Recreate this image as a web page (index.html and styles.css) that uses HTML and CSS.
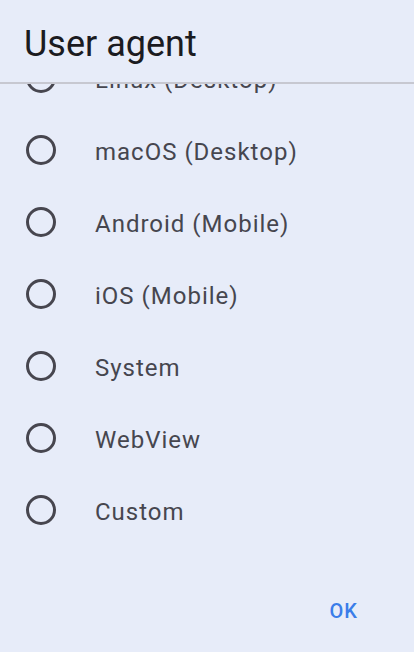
FILE: index.html
```html
<!DOCTYPE html>
<html lang="en">
<head>
<meta charset="utf-8">
<title>User agent</title>
<link rel="stylesheet" href="styles.css">
</head>
<body>
<div class="dialog">
  <header class="header">
    <h1 class="title">User agent</h1>
  </header>
  <div class="divider"></div>
  <div class="list">
    <div class="list-inner">
      <div class="row"><svg class="radio" viewBox="0 0 30 30"><circle cx="15" cy="15" r="13.5"/></svg><span class="label">Linux (Desktop)</span></div>
      <div class="row"><svg class="radio" viewBox="0 0 30 30"><circle cx="15" cy="15" r="13.5"/></svg><span class="label">macOS (Desktop)</span></div>
      <div class="row"><svg class="radio" viewBox="0 0 30 30"><circle cx="15" cy="15" r="13.5"/></svg><span class="label">Android (Mobile)</span></div>
      <div class="row"><svg class="radio" viewBox="0 0 30 30"><circle cx="15" cy="15" r="13.5"/></svg><span class="label">iOS (Mobile)</span></div>
      <div class="row"><svg class="radio" viewBox="0 0 30 30"><circle cx="15" cy="15" r="13.5"/></svg><span class="label">System</span></div>
      <div class="row"><svg class="radio" viewBox="0 0 30 30"><circle cx="15" cy="15" r="13.5"/></svg><span class="label">WebView</span></div>
      <div class="row"><svg class="radio" viewBox="0 0 30 30"><circle cx="15" cy="15" r="13.5"/></svg><span class="label">Custom</span></div>
    </div>
  </div>
  <footer class="footer">
    <button class="btn">OK</button>
  </footer>
</div>
</body>
</html>
```

FILE: styles.css
```css
html, body {
  margin: 0;
  padding: 0;
  background: #e7ecf9;
}
body {
  font-family: Roboto, "Noto Sans", sans-serif;
}
.dialog {
  width: 414px;
  height: 652px;
  display: flex;
  flex-direction: column;
  background: #e7ecf9;
  overflow: hidden;
}
.header {
  height: 82px;
  display: flex;
  align-items: flex-start;
  padding-left: 24px;
}
.title {
  margin: 0;
  margin-top: 22px;
  font-size: 36px;
  line-height: 44px;
  font-weight: 400;
  color: #1b1b21;
  letter-spacing: 0;
}
.divider {
  height: 2px;
  background: #c7c8d1;
}
.list {
  flex: 1;
  overflow: hidden;
}
.list-inner {
  margin-top: -42px;
}
.row {
  height: 72px;
  display: flex;
  align-items: center;
  padding-left: 26px;
  gap: 39px;
}
.radio {
  width: 30px;
  height: 30px;
  flex: none;
}
.radio circle {
  fill: none;
  stroke: #47464f;
  stroke-width: 3;
}
.label {
  font-size: 24px;
  line-height: 32px;
  color: #46464f;
  letter-spacing: 1px;
  padding-top: 4px;
}
.footer {
  height: 84px;
  display: flex;
  align-items: center;
  justify-content: flex-end;
  padding-right: 38px;
}
.btn {
  border: none;
  background: none;
  font-family: Roboto, "Noto Sans", sans-serif;
  font-size: 20px;
  font-weight: 500;
  letter-spacing: 1px;
  color: #3b7de9;
  padding: 10px 18px 10px 18px;
  margin: 0;
  margin-top: 2px;
}
```
